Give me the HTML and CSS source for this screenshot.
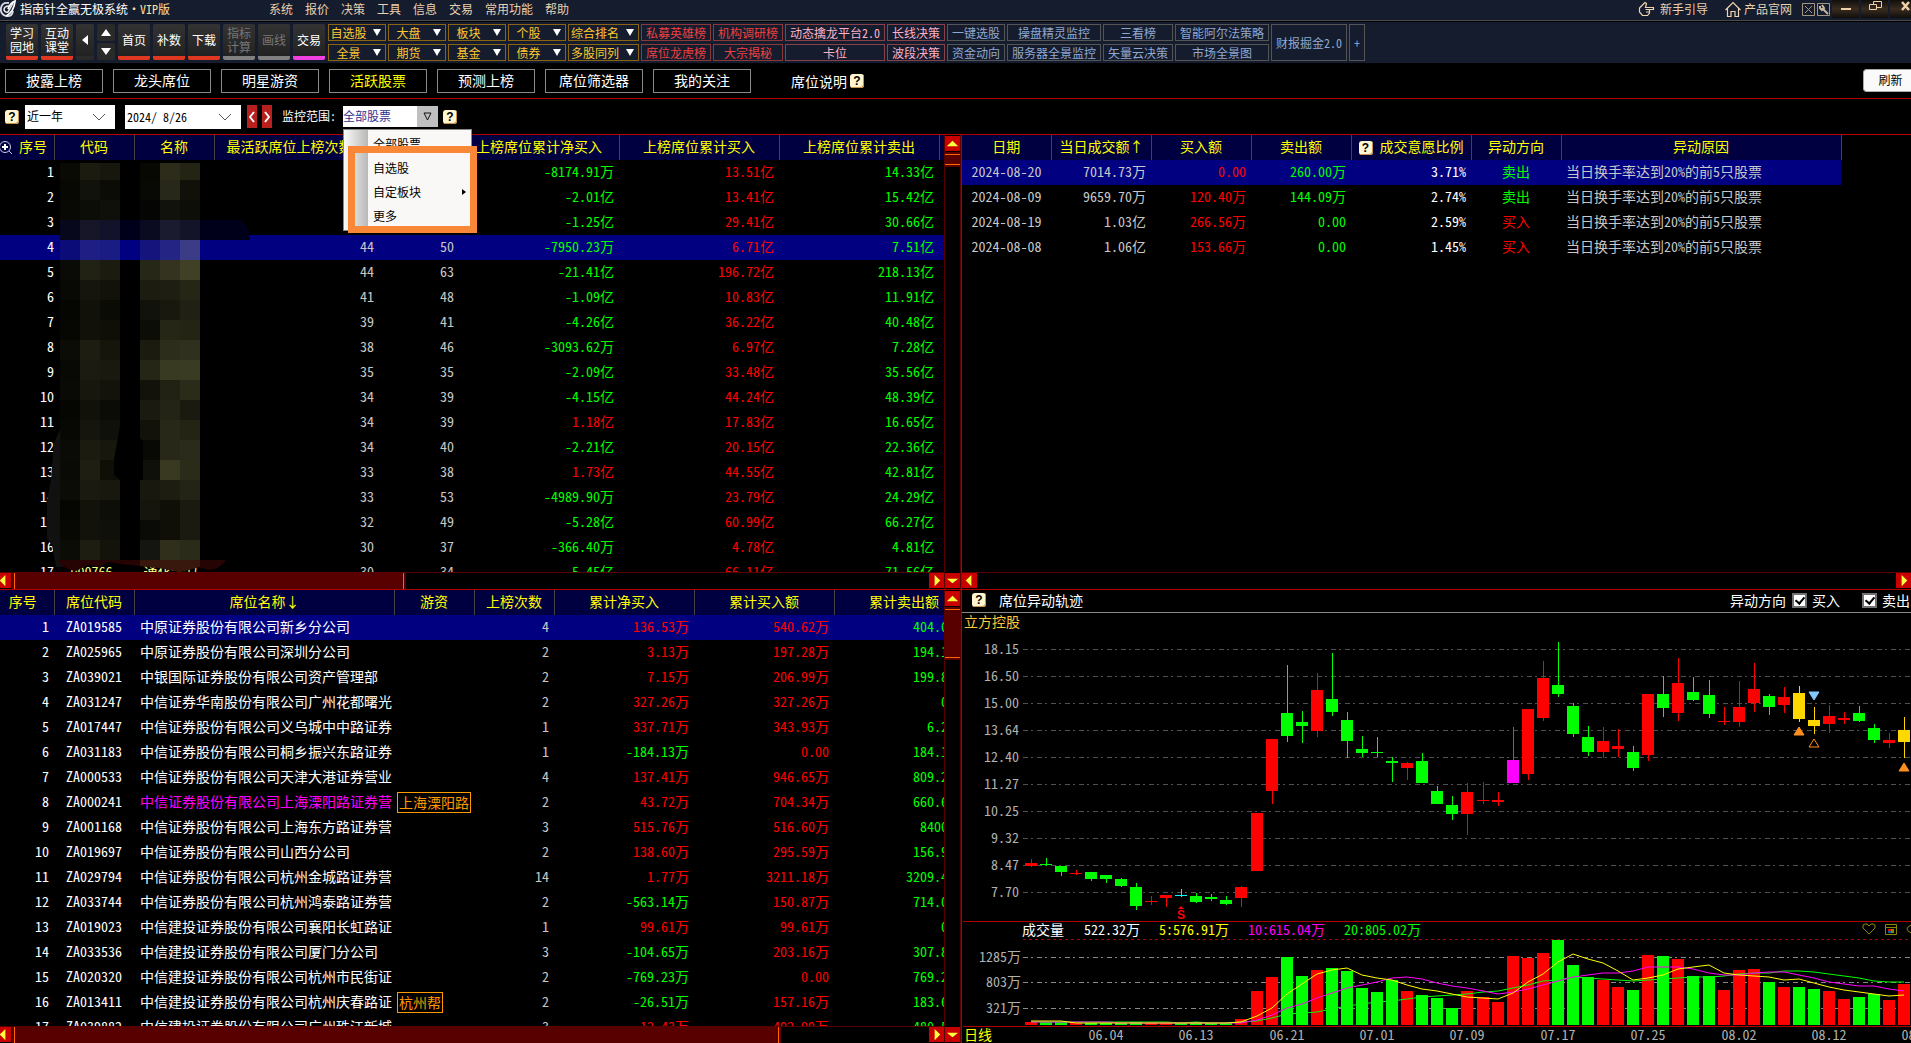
FILE: index.html
```html
<!DOCTYPE html>
<html lang="zh-CN">
<head>
<meta charset="utf-8">
<title>指南针全赢无极系统·VIP版</title>
<link rel="stylesheet" href="styles.css">
</head>
<body>
<svg class="defs" aria-hidden="true">
  <symbol id="up" viewBox="0 0 16 16"><path d="M8 5L14 11H2Z" fill="#ffff40"/></symbol>
  <symbol id="down" viewBox="0 0 16 16"><path d="M2 6H14L8 11Z" fill="#ffff40"/></symbol>
  <symbol id="left" viewBox="0 0 16 16"><path d="M10 2V14L4 8Z" fill="#ffff40"/></symbol>
  <symbol id="right" viewBox="0 0 16 16"><path d="M6 2V14L12 8Z" fill="#ffff40"/></symbol>
  <symbol id="chevron" viewBox="0 0 14 8"><path d="M1 1L7 7L13 1" fill="none" stroke="#555"/></symbol>
</svg>

<header class="titlebar">
  <svg class="logo" viewBox="0 0 16 18"><path d="M9 3Q2 2 1 8Q0 14 6 16Q12 17 13 11" fill="none" stroke="#d8d8e4" stroke-width="1.800"/><path d="M9 6Q4 6 4 10Q5 13 8 12L13 3" fill="none" stroke="#e8e8f0" stroke-width="1.600"/><path d="M6 16Q14 12 15 1Q10 3 8 9" fill="none" stroke="#fff" stroke-width="1.800"/></svg>
  <h1>指南针全赢无极系统<span>·VIP版</span></h1>
  <nav class="menu">
    <a href="#">系统</a><a href="#">报价</a><a href="#">决策</a><a href="#">工具</a><a href="#">信息</a><a href="#">交易</a><a href="#">常用功能</a><a href="#">帮助</a>
  </nav>
  <div class="links">
    <a href="#"><svg width="17" height="16" viewBox="0 0 17 16"><path d="M7 1.500L1.500 7V11L4.500 14.500H9.500L11.500 12V8.500H15.500V6.500H7.500L8.500 2.500ZM7.500 8.500H11.500M8 11H11.500" fill="none" stroke="#f0d4b0" stroke-width="1.200"/></svg>新手引导</a>
    <a href="#"><svg width="16" height="17" viewBox="0 0 16 17"><path d="M.5 9L8 1.500L15.500 9M2.500 7.500V15.500H6V10.500H10V15.500H13.500V7.500" fill="none" stroke="#f0d4b0" stroke-width="1.200"/></svg>产品官网</a>
  </div>
  <div class="tools">
    <button aria-label="关闭面板"><svg width="13" height="13" viewBox="0 0 13 13"><path d="M.5.5H12.500V12.500H.5ZM3 3L10 10M10 3L3 10" fill="none" stroke="#a59682"/></svg></button>
    <button aria-label="设置"><svg width="13" height="13" viewBox="0 0 13 13"><path d="M.5.5H12.500V12.500H.5Z" fill="none" stroke="#a59682"/><path d="M6 6L11 11" stroke="#c8b8a0" stroke-width="2"/><path d="M3 3V5L5 7L7 5L5 2" fill="none" stroke="#c8b8a0" stroke-width="2"/></svg></button>
  </div>
  <div class="window">
    <button aria-label="最小化"><svg width="12" height="14" viewBox="0 0 12 14"><path d="M1 9H11" stroke="#f0d0a8" stroke-width="2"/></svg></button>
    <button aria-label="还原"><svg width="14" height="14" viewBox="0 0 14 14"><path d="M1.500 4.500H8.500V9.500H1.500ZM5.500 4.500V1.500H13.500V7.500H8.500" fill="none" stroke="#f0d0a8"/></svg></button>
    <button aria-label="关闭"><svg width="10" height="14" viewBox="0 0 10 14"><path d="M1 2L8 10M8 2L1 10" stroke="#f0d0a8" stroke-width="2.500"/></svg></button>
  </div>
</header>

<div class="toolbar">
  <button class="tool">学习<br>园地</button>
  <button class="tool">互动<br>课堂</button>
  <button class="tool narrow" aria-label="向左"><svg width="6" height="10" viewBox="0 0 6 10"><path d="M6 0V10L0 5Z" fill="#fff"/></svg></button>
  <div class="pair">
    <button aria-label="向上"><svg width="10" height="7" viewBox="0 0 10 7"><path d="M0 7H10L5 0Z" fill="#fff"/></svg></button>
    <button aria-label="向下"><svg width="10" height="7" viewBox="0 0 10 7"><path d="M0 0H10L5 7Z" fill="#fff"/></svg></button>
  </div>
  <button class="tool">首页</button>
  <button class="tool">补数</button>
  <button class="tool">下载</button>
  <button class="tool off" disabled>指标<br>计算</button>
  <button class="tool off" disabled>画线</button>
  <button class="tool trade">交易</button>
  <div class="shortcuts">
    <button class="gold">自选股<i></i></button><button class="gold">大盘<i></i></button><button class="gold">板块<i></i></button><button class="gold">个股<i></i></button><button class="gold">综合排名<i></i></button>
    <button class="red">私募英雄榜</button><button class="red">机构调研榜</button><button class="pink">动态擒龙平台2.0</button><button class="pink">长线决策</button>
    <button>一键选股</button><button>操盘精灵监控</button><button>三看榜</button><button>智能阿尔法策略</button><button class="tall">财报掘金2.0</button><button class="tall">+</button>
    <button class="gold">全景<i></i></button><button class="gold">期货<i></i></button><button class="gold">基金<i></i></button><button class="gold">债券<i></i></button><button class="gold">多股同列<i></i></button>
    <button class="red">席位龙虎榜</button><button class="red">大宗揭秘</button><button class="pink">卡位</button><button class="pink">波段决策</button>
    <button>资金动向</button><button>服务器全景监控</button><button>矢量云决策</button><button>市场全景图</button>
  </div>
</div>

<nav class="tabs">
  <button>披露上榜</button><button>龙头席位</button><button>明星游资</button><button class="active">活跃股票</button><button>预测上榜</button><button>席位筛选器</button><button>我的关注</button>
  <span class="note">席位说明<button class="help" aria-label="说明">?</button></span>
  <button class="refresh">刷新</button>
</nav>

<div class="filters">
  <button class="help" aria-label="说明">?</button>
  <span class="field period"><select aria-label="周期"><option>近一年</option></select><svg width="14" height="8"><use href="#chevron"/></svg></span>
  <span class="field date"><input type="text" value="2024/ 8/26" aria-label="日期"><svg width="14" height="8"><use href="#chevron"/></svg></span>
  <span class="step"><button aria-label="前一日"><svg width="6" height="12" viewBox="0 0 6 12"><path d="M5 1L1 6L5 11" fill="none" stroke="#fff" stroke-width="2"/></svg></button><button aria-label="后一日"><svg width="6" height="12" viewBox="0 0 6 12"><path d="M1 1L5 6L1 11" fill="none" stroke="#fff" stroke-width="2"/></svg></button></span>
  <label for="scope">监控范围:</label>
  <span class="scope">
    <span class="field combo"><select id="scope"><option>全部股票</option></select><span class="drop"><svg width="9" height="9" viewBox="0 0 9 9"><path d="M1 1H8L4.500 8Z" fill="none" stroke="#111"/></svg></span></span>
    <span class="popup" role="menu">
      <button role="menuitem">全部股票</button><button role="menuitem">自选股</button><button role="menuitem">自定板块<svg width="4" height="6" viewBox="0 0 4 6"><path d="M0 0L4 3L0 6Z" fill="#000"/></svg></button><button role="menuitem">更多</button>
      <span class="frame"></span>
    </span>
  </span>
  <button class="help" aria-label="说明">?</button>
</div>

<main>
<section class="pane stocks">
  <div class="view">
    <table>
      <colgroup><col class="w54"><col class="w80"><col class="w80"><col class="w165"><col class="w80"><col class="w160"><col class="w160"><col class="w160"><col></colgroup>
      <thead><tr><th><svg class="lens" width="13" height="14" viewBox="0 0 13 14"><circle cx="5" cy="6" r="5.500" fill="none" stroke="#c8c8e0"/><path d="M5 3V9M2 6H8" stroke="#fff" stroke-width="2"/><path d="M9 10L12 13" stroke="#c8c8e0"/></svg>序号</th><th>代码</th><th>名称</th><th class="first">最活跃席位上榜次数</th><th></th><th>上榜席位累计净买入</th><th>上榜席位累计买入</th><th>上榜席位累计卖出</th><th></th></tr></thead>
      <tbody>
      <tr><td>1<td><td><td><td><td class="g">-8174.91万<td class="r">13.51亿<td class="g">14.33亿<td></tr>
      <tr><td>2<td><td><td><td><td class="g">-2.01亿<td class="r">13.41亿<td class="g">15.42亿<td></tr>
      <tr><td>3<td><td><td><td><td class="g">-1.25亿<td class="r">29.41亿<td class="g">30.66亿<td></tr>
      <tr class="sel"><td>4<td><td><td>44<td>50<td class="g">-7950.23万<td class="r">6.71亿<td class="g">7.51亿<td></tr>
      <tr><td>5<td><td><td>44<td>63<td class="g">-21.41亿<td class="r">196.72亿<td class="g">218.13亿<td></tr>
      <tr><td>6<td><td><td>41<td>48<td class="g">-1.09亿<td class="r">10.83亿<td class="g">11.91亿<td></tr>
      <tr><td>7<td><td><td>39<td>41<td class="g">-4.26亿<td class="r">36.22亿<td class="g">40.48亿<td></tr>
      <tr><td>8<td><td><td>38<td>46<td class="g">-3093.62万<td class="r">6.97亿<td class="g">7.28亿<td></tr>
      <tr><td>9<td><td><td>35<td>35<td class="g">-2.09亿<td class="r">33.48亿<td class="g">35.56亿<td></tr>
      <tr><td>10<td><td><td>34<td>39<td class="g">-4.15亿<td class="r">44.24亿<td class="g">48.39亿<td></tr>
      <tr><td>11<td><td><td>34<td>39<td class="r">1.18亿<td class="r">17.83亿<td class="g">16.65亿<td></tr>
      <tr><td>12<td><td><td>34<td>40<td class="g">-2.21亿<td class="r">20.15亿<td class="g">22.36亿<td></tr>
      <tr><td>13<td><td><td>33<td>38<td class="r">1.73亿<td class="r">44.55亿<td class="g">42.81亿<td></tr>
      <tr><td>14<td><td><td>33<td>53<td class="g">-4989.90万<td class="r">23.79亿<td class="g">24.29亿<td></tr>
      <tr><td>15<td><td><td>32<td>49<td class="g">-5.28亿<td class="r">60.99亿<td class="g">66.27亿<td></tr>
      <tr><td>16<td><td><td>30<td>37<td class="g">-366.40万<td class="r">4.78亿<td class="g">4.81亿<td></tr>
      <tr><td>17<td class="id">000766<td class="id">通化金马<td>30<td>34<td class="g">-5.45亿<td class="r">66.11亿<td class="g">71.56亿<td></tr>
      </tbody>
    </table>
    <svg class="mosaic" id="mosaic" width="260" height="437" aria-hidden="true"></svg>
  </div>
  <div class="vbar"><button aria-label="向上"><svg><use href="#up"/></svg></button><span class="thumb short"></span></div>
  <div class="hbar"><button class="cut" aria-label="向左"><svg><use href="#left"/></svg></button><span class="track"><span class="thumb half"></span></span><button aria-label="向右"><svg><use href="#right"/></svg></button></div>
  <div class="corner"><button aria-label="向下"><svg><use href="#down"/></svg></button></div>
</section>

<section class="pane moves">
  <div class="view">
    <table>
      <colgroup><col class="w89"><col class="w100"><col class="w100"><col class="w100"><col class="w120"><col class="w90"><col class="w280"></colgroup>
      <thead><tr><th>日期</th><th>当日成交额<span class="arrow">↑</span></th><th>买入额</th><th>卖出额</th><th><span class="help">?</span> 成交意愿比例</th><th>异动方向</th><th>异动原因</th></tr></thead>
      <tbody>
      <tr class="sel"><td>2024-08-20<td>7014.73万<td class="r">0.00<td class="g">260.00万<td class="w">3.71%<td class="g">卖出<td>当日换手率达到20%的前5只股票</tr>
      <tr><td>2024-08-09<td>9659.70万<td class="r">120.40万<td class="g">144.09万<td class="w">2.74%<td class="g">卖出<td>当日换手率达到20%的前5只股票</tr>
      <tr><td>2024-08-19<td>1.03亿<td class="r">266.56万<td class="g">0.00<td class="w">2.59%<td class="r">买入<td>当日换手率达到20%的前5只股票</tr>
      <tr><td>2024-08-08<td>1.06亿<td class="r">153.66万<td class="g">0.00<td class="w">1.45%<td class="r">买入<td>当日换手率达到20%的前5只股票</tr>
      </tbody>
    </table>
  </div>
  <div class="hbar"><button aria-label="向左"><svg><use href="#left"/></svg></button><span class="track"></span><button aria-label="向右"><svg><use href="#right"/></svg></button></div>
</section>

<section class="pane seats">
  <div class="view">
    <table>
      <colgroup><col class="w54"><col class="w80"><col class="w260"><col class="w80"><col class="w80"><col class="w140"><col class="w140"><col class="w140"></colgroup>
      <thead><tr><th>序号</th><th>席位代码</th><th>席位名称<span class="arrow">↓</span></th><th>游资</th><th>上榜次数</th><th>累计净买入</th><th>累计买入额</th><th>累计卖出额</th></tr></thead>
      <tbody>
      <tr class="sel"><td>1<td>ZA019585<td>中原证券股份有限公司新乡分公司<td><td>4<td class="r">136.53万<td class="r">540.62万<td class="g">404.09万</tr>
      <tr><td>2<td>ZA025965<td>中原证券股份有限公司深圳分公司<td><td>2<td class="r">3.13万<td class="r">197.28万<td class="g">194.15万</tr>
      <tr><td>3<td>ZA039021<td>中银国际证券股份有限公司资产管理部<td><td>2<td class="r">7.15万<td class="r">206.99万<td class="g">199.84万</tr>
      <tr><td>4<td>ZA031247<td>中信证券华南股份有限公司广州花都曙光<td><td>2<td class="r">327.26万<td class="r">327.26万<td class="g">0.00</tr>
      <tr><td>5<td>ZA017447<td>中信证券股份有限公司义乌城中中路证券<td><td>1<td class="r">337.71万<td class="r">343.93万<td class="g">6.22万</tr>
      <tr><td>6<td>ZA031183<td>中信证券股份有限公司桐乡振兴东路证券<td><td>1<td class="g">-184.13万<td class="r">0.00<td class="g">184.13万</tr>
      <tr><td>7<td>ZA000533<td>中信证券股份有限公司天津大港证券营业<td><td>4<td class="r">137.41万<td class="r">946.65万<td class="g">809.24万</tr>
      <tr class="hot"><td>8<td>ZA000241<td>中信证券股份有限公司上海溧阳路证券营<td><span class="tag">上海溧阳路</span><td>2<td class="r">43.72万<td class="r">704.34万<td class="g">660.62万</tr>
      <tr><td>9<td>ZA001168<td>中信证券股份有限公司上海东方路证券营<td><td>3<td class="r">515.76万<td class="r">516.60万<td class="g">8400.00</tr>
      <tr><td>10<td>ZA019697<td>中信证券股份有限公司山西分公司<td><td>2<td class="r">138.60万<td class="r">295.59万<td class="g">156.99万</tr>
      <tr><td>11<td>ZA029794<td>中信证券股份有限公司杭州金城路证券营<td><td>14<td class="r">1.77万<td class="r">3211.18万<td class="g">3209.41万</tr>
      <tr><td>12<td>ZA033744<td>中信证券股份有限公司杭州鸿泰路证券营<td><td>2<td class="g">-563.14万<td class="r">150.87万<td class="g">714.01万</tr>
      <tr><td>13<td>ZA019023<td>中信建投证券股份有限公司襄阳长虹路证<td><td>1<td class="r">99.61万<td class="r">99.61万<td class="g">0.00</tr>
      <tr><td>14<td>ZA033536<td>中信建投证券股份有限公司厦门分公司<td><td>3<td class="g">-104.65万<td class="r">203.16万<td class="g">307.81万</tr>
      <tr><td>15<td>ZA020320<td>中信建投证券股份有限公司杭州市民街证<td><td>2<td class="g">-769.23万<td class="r">0.00<td class="g">769.23万</tr>
      <tr><td>16<td>ZA013411<td>中信建投证券股份有限公司杭州庆春路证<td><span class="tag">杭州帮</span><td>2<td class="g">-26.51万<td class="r">157.16万<td class="g">183.67万</tr>
      <tr><td>17<td>ZA039882<td>中信建投证券股份有限公司广州珠江新城<td><td>3<td class="r">12.43万<td class="r">492.99万<td class="g">480.56万</tr>
      </tbody>
    </table>
  </div>
  <div class="vbar"><button aria-label="向上"><svg><use href="#up"/></svg></button><span class="thumb long"></span></div>
  <div class="hbar"><button class="cut" aria-label="向左"><svg><use href="#left"/></svg></button><span class="track"><span class="thumb most"></span></span><button aria-label="向右"><svg><use href="#right"/></svg></button></div>
  <div class="corner"><button aria-label="向下"><svg><use href="#down"/></svg></button></div>
</section>

<section class="pane chart">
  <header><span class="help">?</span><h2>席位异动轨迹</h2><div class="checks">异动方向<label><input type="checkbox" checked>买入</label><label><input type="checkbox" checked>卖出</label></div></header>
  <svg id="kline" width="100%" height="430" role="img" aria-label="立方控股 日线"></svg>
</section>
</main>
<script src="chart.js"></script>
</body>
</html>
```
FILE: styles.css
```css
* { box-sizing: border-box; }
body {
  margin: 0;
  height: 100vh;
  overflow: hidden;
  display: flex;
  flex-direction: column;
  background: #000;
  color: #fff;
  font: 14px/25px "Noto Sans Mono CJK SC", "Liberation Serif", "Noto Sans CJK SC", sans-serif;
  white-space: nowrap;
}
button, input, select { font: inherit; color: inherit; padding: 0; margin: 0; border: 0; background: none; border-radius: 0; }
a { color: inherit; text-decoration: none; }
h1, h2 { margin: 0; font: inherit; }
svg { display: block; flex: none; }
.defs { position: absolute; width: 0; height: 0; }
.r { color: #f00; }
.g { color: #0f0; }

/* title bar */
.titlebar { display: flex; align-items: center; height: 21px; flex: none; background: #151c2d; border-bottom: 1px solid #4a4a4a; font-size: 12px; line-height: 16px; color: #e8d0b0; padding-bottom: 2px; }
.logo { width: 16px; height: 18px; margin-right: 4px; }
.titlebar h1 { color: #fff; width: 249px; }
.titlebar h1 span { color: #ffe0a0; }
.menu { display: flex; gap: 12px; }
.links { display: flex; gap: 17px; margin-left: auto; }
.links a { display: flex; align-items: center; gap: 5px; }
.links a + a { gap: 3px; }
.tools { display: flex; gap: 2px; margin: 0 2px 0 10px; }
.window { display: flex; gap: 2px; align-self: stretch; }
.window button { width: 27px; display: flex; justify-content: center; background: linear-gradient(#100e0c, #3a2c20, #100e0c); }
.window button:last-child { width: 21px; justify-content: flex-end; }

/* toolbar */
.toolbar { display: flex; height: 42px; flex: none; background: #151c2d; border-top: 1px solid #000; padding: 2px 0 0 6px; font-size: 12px; line-height: 14px; }
.tool { width: 32px; height: 36px; margin-right: 3px; background: linear-gradient(#333, #222); border-bottom: 4px solid #e03820; border-radius: 2px; display: flex; align-items: center; justify-content: center; }
.tool.narrow { width: 18px; border-color: #2a2a2a; }
.tool.off { color: #777; border-color: #808080; }
.tool.trade { border-color: #f040e0; }
.pair { display: grid; gap: 2px; width: 18px; height: 36px; margin-right: 3px; }
.pair button { background: #2a2a2a; border-radius: 2px; display: grid; place-items: center; }
.shortcuts { display: grid; grid-template-columns: 58px 58px 58px 58px 71px 70px 70px 100px 58px 58px 94px 70px 94px 76px 16px; grid-template-rows: 17px 17px; gap: 3px 2px; }
.shortcuts button { display: flex; align-items: center; justify-content: center; border: 1px solid #555; color: #90a8d0; }
.shortcuts .tall { grid-row: span 2; }
.shortcuts .gold { display: grid; grid-template-columns: 1fr 17px; justify-items: center; border-color: #8a6410; color: #ffc830; }
.shortcuts .red { border-color: #8a3838; color: #f04040; }
.shortcuts .pink { border-color: #8a4048; color: #ffb0c8; }
.shortcuts i { border: 4px solid transparent; border-top: 7px solid #fff; border-bottom: 0; }

/* page tabs */
.tabs { display: flex; align-items: center; gap: 10px; height: 36px; flex: none; padding-left: 5px; border-bottom: 1px solid #b00000; line-height: 20px; }
.tabs > button { width: 98px; height: 24px; border: 1px solid #888; padding-bottom: 2px; }
.tabs .active { color: #ff0; }
.note { display: flex; align-items: center; gap: 3px; margin-left: 30px; }
.tabs .refresh { width: 48px; height: 23px; margin-left: auto; background: #fafafa; color: #000; border: 1px solid #aaa; border-right: 0; border-radius: 4px 0 0 4px; font-size: 12px; padding-left: 6px; }
.help { display: inline-block; width: 14px; height: 14px; font: bold 12px/14px "Liberation Sans", sans-serif; text-align: center; color: #000; background: #fff6d0; border-radius: 3px; box-shadow: inset -1px -1px #c89048; }

/* filters */
.filters { display: flex; align-items: center; height: 36px; flex: none; padding-left: 5px; border-bottom: 1px solid #b00000; font-size: 12px; line-height: 20px; }
.filters label { padding-bottom: 2px; }
.field { display: grid; align-items: center; height: 24px; background: #fff; color: #000; }
.field > * { grid-area: 1 / 1; }
.field > svg { justify-self: end; margin-right: 9px; pointer-events: none; }
.field select, .field input { width: 100%; height: 100%; padding: 0 2px 1px; appearance: none; outline: 0; }
.period { width: 90px; margin: 0 10px 0 6px; }
.date { width: 116px; margin-right: 6px; }
.step { display: flex; gap: 5px; margin-right: 10px; }
.step button { width: 10px; height: 23px; background: #b82020; display: grid; place-items: center; }
.scope { position: relative; margin: 0 5px 0 7px; }
.combo { width: 95px; height: 21px; color: #303090; }
.combo select { padding: 0 0 1px; }
.drop { justify-self: end; width: 21px; height: 21px; background: #c0c0c0; display: grid; place-items: center; pointer-events: none; }
.popup { position: absolute; z-index: 3; top: 23px; left: 0; width: 129px; height: 102px; padding: 2px 0 0 29px; border: 1px solid #888; background: linear-gradient(90deg, #fafaf8, #b8b8b8 24px, #f9f8f7 24px); }
.popup button { display: flex; align-items: center; justify-content: space-between; width: 93px; height: 24px; color: #000; }
.frame { position: absolute; top: 16px; left: 4px; width: 129px; height: 87px; border: 7px solid #f88838; }

/* panes */
main { flex: 1; min-height: 0; display: grid; grid-template: 455fr 453fr / 961fr 950fr; }
.pane { min-width: 0; min-height: 0; overflow: hidden; display: grid; grid-template: minmax(0, 1fr) 16px / minmax(0, 1fr) 17px; }
.stocks, .moves { border-bottom: 1px solid #b00000; }
.moves, .chart { border-left: 1px solid #b00000; grid-template-columns: minmax(0, 1fr); }
.view { position: relative; overflow: hidden; border-bottom: 1px solid #580000; }
table { border-collapse: collapse; table-layout: fixed; width: 100%; }
.seats table { width: 974px; }
.moves table { width: 879px; }
th, td { padding: 0; height: 25px; font-weight: normal; overflow: hidden; vertical-align: top; line-height: 23px; }
th { background: #000040; color: #ff0; border-right: 1px solid #444; text-align: center; }
td { padding-right: 5px; text-align: right; color: #c8c8c8; }
td:first-child, .w { color: #fff; }
td.r { color: #f00; }
td.g { color: #0f0; }
.sel { background: #000080; }
.arrow { font-family: "Noto Sans CJK SC", sans-serif; display: inline-block; width: 13px; overflow: hidden; vertical-align: top; }
.w54 { width: 54px; } .w80 { width: 80px; } .w89 { width: 89px; } .w90 { width: 90px; }
.w100 { width: 100px; } .w120 { width: 120px; } .w140 { width: 140px; } .w160 { width: 160px; }
.w165 { width: 165px; } .w260 { width: 260px; } .w280 { width: 280px; }
.stocks th:first-child { text-align: left; }
.stocks th:last-child { border: 0; }
.stocks td:first-child { padding: 0; }
.stocks .first { text-align: left; padding-left: 12px; }
.stocks .id { text-align: center; color: #ffff80; }
.lens { display: inline; vertical-align: middle; margin: 0 6px 0 0; }
.seats th:first-child { padding-right: 8px; }
.seats td:nth-child(2) { text-align: center; padding: 0; color: #fff; }
.seats td:nth-child(3) { text-align: left; padding: 0 0 0 6px; color: #fff; }
.seats td:nth-child(4) { text-align: left; padding: 2px 0 0 3px; }
.seats .hot td:nth-child(3) { color: #f0f; }
.tag { display: block; width: max-content; height: 21px; padding: 0 1px; border: 1px solid #f90; color: #f90; line-height: 18px; }
.moves td:first-child { color: #c8c8c8; text-align: center; padding: 0; }
.moves td:nth-child(6) { text-align: center; padding: 0; }
.moves td:last-child { text-align: left; padding-left: 5px; }
.moves .w { color: #fff; }
.mosaic { position: absolute; top: 0; left: 0; }

/* scroll bars */
.vbar, .corner { border-left: 1px solid #580000; border-right: 1px solid #580000; padding-top: 1px; }
.vbar button, .hbar button, .corner button { display: block; width: 15px; height: 15px; background: #c80000; }
.hbar button svg, .vbar button svg, .corner button svg { width: 15px; height: 15px; }
.vbar .thumb { display: block; margin-top: 1px; background: #580000; border: solid #580000; border-width: 2px 0; box-shadow: inset 0 1px #f60, inset 0 -1px #f60; }
.short { height: 15px; }
.long { height: 53px; }
.hbar { display: flex; align-items: stretch; gap: 1px; }
.hbar .cut { width: 11px; overflow: hidden; display: flex; justify-content: flex-end; }
.track { flex: 1; display: flex; }
.track .thumb { background: #580000; border: solid #580000; border-width: 0 2px; box-shadow: inset 1px 0 #f60, inset -1px 0 #f60; }
.half { width: 43%; }
.most { width: 84%; }
.corner { padding: 0; }

/* chart */
.chart { grid-template-rows: 23px 1fr; }
.chart header { display: flex; align-items: center; border-bottom: 1px solid #888; padding: 0 1px 2px 10px; line-height: 20px; }
.chart h2 { margin-left: 13px; }
.checks { display: flex; gap: 6px; margin-left: auto; }
.checks label { display: flex; align-items: center; gap: 5px; }
.checks label + label { margin-left: 16px; }
.checks input { appearance: none; width: 15px; height: 15px; border: 2px solid #707070; background: #fff; }
.checks input:checked::after { content: ""; display: block; width: 4px; height: 7px; margin: 0 auto; border: solid #000; border-width: 0 2px 2px 0; transform: rotate(40deg); }
#kline { overflow: hidden; }
#kline text { font-size: 14px; }
#kline .sell { font: bold 12px "Liberation Sans", sans-serif; }
```
FILE: chart.js
```js
const NS = 'http://www.w3.org/2000/svg';
function add(svg, name, attrs, text) {
  const el = document.createElementNS(NS, name);
  for (const k in attrs) el.setAttribute(k, attrs[k]);
  if (text) el.textContent = text;
  svg.appendChild(el);
  return el;
}

const svg = document.getElementById('kline');
const COLORS = { r: '#f00', g: '#0f0', c: '#00ffff', m: '#f0f', y: '#ffd700' };

// kind, high, body top, body bottom, low, volume top, volume colour (if it differs)
const days = [
  'r 246 250 253 254 409','g 245 251 252 253 409','g 253 253 259 263 409','r 257 260 261 262 410','g 259 259 266 268 410',
  'g 262 262 266 270 410','g 265 266 273 274 410','g 270 274 293 297 409','r 283 288 289 292 410','r 282 282 285 294 410',
  'c 276 282 283 284 410 g','g 280 283 289 290 409','g 281 284 286 288 410','g 283 287 291 292 410','r 273 274 285 294 406',
  'r 200 200 258 258 378','r 126 126 178 191 364','g 52 100 123 129 344','g 98 109 113 130 363','r 60 77 118 124 357',
  'g 40 86 99 103 355','g 99 107 128 145 358','g 123 136 140 144 375','g 124 139 140 144 379','g 144 148 150 169 367',
  'r 149 150 155 167 378','g 140 148 170 170 382','g 173 178 191 191 385','g 183 192 201 207 395','r 170 179 201 222 378',
  'r 169 187 188 191 384','r 179 187 189 193 389','m 114 147 170 170 343 r','r 96 96 161 167 345','r 48 65 105 108 340',
  'g 29 72 81 84 327','g 90 93 121 124 352','g 113 124 139 143 364','r 114 128 139 145 367','r 116 133 136 144 374',
  'g 133 139 155 158 377','r 81 81 142 148 342','g 63 81 95 104 343','r 45 70 100 108 346','g 64 79 87 88 363',
  'g 67 82 101 105 363','r 94 108 109 112 377','r 68 94 109 114 357','r 50 76 90 99 356','g 81 83 94 102 369',
  'r 74 84 92 100 374','y 73 80 106 109 374 g','y 94 107 113 121 376 g','r 92 103 111 120 378','r 99 105 107 111 386',
  'g 93 100 108 109 384','g 111 115 127 130 381','r 120 127 130 135 387','y 104 117 129 145 371 r'
].map(s => s.split(' '));

const ma5 = [408,408,408,410,410,410,410,410,410,410,410,410,410,410,409,403,395,381,371,361,357,355,362,365,367,372,376,378,381,384,385,386,380,369,361,349,341,346,350,358,367,365,362,356,354,352,360,362,363,364,367,366,370,374,377,379,381,383,382];
const ma10 = [409,409,409,409,409,409,410,410,410,410,410,410,410,410,410,407,402,395,391,385,380,375,372,369,365,364,366,370,373,375,378,381,379,376,372,368,364,362,360,360,358,354,354,354,356,360,362,362,360,359,359,362,365,369,371,373,373,376,378];
const ma20 = [409,409,409,409,409,409,409,409,409,409,410,409,410,410,409,408,405,401,400,399,396,393,391,389,388,386,384,383,382,381,379,378,375,372,368,367,364,365,366,367,368,367,366,365,364,364,363,361,360,360,358,358,359,361,363,365,368,369,369];
const left = i => 63 + 15 * i + Math.floor(i / 15);

function hline(y, stroke, dash, x1) {
  add(svg, 'line', { x1: x1 || 1, x2: '100%', y1: y + .5, y2: y + .5, stroke, 'stroke-dasharray': dash || 'none' });
}
function label(x, y, text, fill, anchor) {
  add(svg, 'text', { x, y: y + 5, fill, 'text-anchor': anchor || 'start' }, text);
}

label(2, 9, '立方控股', '#ffc840');
['18.15','16.50','15.00','13.64','12.40','11.27','10.25','9.32','8.47','7.70'].forEach((t, k) => {
  hline(36 + 27 * k, '#505050', '5 3 2 4', 61);
  label(57, 36 + 27 * k, t, '#b0b0b0', 'end');
});
[[344, '1285万'], [369, '803万'], [395, '321万']].forEach(([y, t]) => {
  hline(y, '#888', '5 3 2 4', 61);
  label(59, y, t, '#b0b0b0', 'end');
});
hline(308, '#b00000');
hline(326, '#b00000', '3 3', 61);
hline(413, '#b00000');
label(60, 317, '成交量', '#fff');
label(122, 317, '522.32万', '#fff');
label(197, 317, '5:576.91万', '#ff0');
label(286, 317, '10:615.04万', '#f0f');
label(382, 317, '20:805.02万', '#0f0');

days.forEach(([kind, high, top, bottom, low, vol, volKind], i) => {
  const x = left(i), fill = COLORS[kind];
  add(svg, 'rect', { x: x + 6, y: high, width: 1, height: low - high, fill });
  add(svg, 'rect', { x, y: top, width: 12, height: bottom - top, fill });
  add(svg, 'rect', { x, y: vol, width: 12, height: 412 - vol, fill: COLORS[volKind || kind] });
});
[[ma20, '#0f0'], [ma10, '#f0f'], [ma5, '#ff0']].forEach(([ma, stroke]) => {
  add(svg, 'polyline', { points: ma.map((y, i) => (left(i) + 6) + ',' + y).join(' '), fill: 'none', stroke });
});

// trade markers
const mark = (i, y, fill, stroke, dir) => {
  const c = left(i) + 6;
  add(svg, 'path', { d: `M${c - 5} ${y}H${c + 5}L${c} ${y + 8 * dir}Z`, fill, stroke });
};
mark(51, 122, '#ff9020', '#ff9020', -1);
mark(52, 134, 'none', '#ff9020', -1);
mark(52, 79, '#80c8ff', '#80c8ff', 1);
mark(58, 158, '#ff9020', '#ff9020', -1);
add(svg, 'text', { x: 219, y: 306, fill: '#f00', 'text-anchor': 'middle', class: 'sell' }, 'S');
add(svg, 'path', { d: 'M216 296L219 293L222 296Z', fill: '#f00' });

// indicator tools
add(svg, 'path', { d: 'M907 321L901 315V312L903 311H905L907 313L909 311H911L913 312V315Z', fill: 'none', stroke: '#888800' });
add(svg, 'path', { d: 'M923.5 311.500H934.500V321.500H923.500ZM923.500 314.500H934.500', fill: 'none', stroke: '#888800' });
add(svg, 'path', { d: 'M926 316H929V318H926Z', fill: '#f00000' });
add(svg, 'path', { d: 'M926 318H929V320H926Z', fill: '#0060a0' });
add(svg, 'path', { d: 'M929 316H932V320H929Z', fill: '#888800' });
add(svg, 'path', { d: 'M949 312Q941 316 949 320', fill: 'none', stroke: '#888800' });

label(2, 422, '日线', '#ff0');
['06.04','06.13','06.21','07.01','07.09','07.17','07.25','08.02','08.12','08.20'].forEach((t, k) => {
  label(left(5 + 6 * k) + 6, 422, t, '#b0b0b0', 'middle');
});

// blurred blocks over the code and name columns, one string per 20px band
const m = document.getElementById('mosaic');
const box = (x, y, w, h, fill) => add(m, 'rect', { x, y, width: w, height: h, fill });
add(m, 'path', { d: 'M62 290L54 308L51 345L47 366V404L52 410L56 432H70V290Z', fill: '#111' });
add(m, 'path', { d: 'M68 85H240Q248 88 250 105H70Z', fill: '#00001a' });
[
  '0a0a05 1b1b10 17170d 080803 2d2c1a 242414', '070703 12120c 0c0c06 080804 27271a 111109',
  '080804 0d0d07 10100a 050503 12120c 0e0e08', '08081c 161628 12122a 0a0a20 1b1b30 141428',
  '0c0c78 1e1e84 1b1b84 14147c 242484 3c3c86', '0a0a06 212114 1b1b10 272718 33331f 3f4026',
  '080804 15150d 12120b 1c1c10 1e1e13 262617', '050502 11110a 0b0b06 12120c 18180f 202014',
  '060603 11110a 0f0f08 0d0d08 262616 242415', '0c0c06 1d1d12 15150c 1b1b10 2d2d1b 2f301d',
  '080804 1b1b11 191910 262616 393a22 3a3b23', '090905 17170d 13130b 12120b 212114 2b2b1a',
  '050502 11110a 0c0c07 1a1a10 242416 1a1a10', '070704 15150d 10100a 12120b 282819 242415',
  '0a0a06 1b1b10 17170e 080804 282819 2b2b1b', '090905 1e1e12 0f0f08 10100a 383920 2b2b1a',
  '0c0c07 1a1a10 18180e 18180e 1d1d12 242416', '050502 12120b 0e0e08 15150d 0f0f08 1a1a10',
  '070703 12120b 10100a 0a0a06 0f0f08 1a1a10', '0c0c07 1d1d12 13130b 141410 2f2f1b 2b2b1a'
].forEach((row, r) => row.split(' ').forEach((c, k) => {
  const y = 25 + r * 20 + (r ? 0 : 3);
  box([60, 80, 100, 140, 160, 180][k], y, 20, r ? 20 : 17, '#' + c);
}));
add(m, 'path', { d: 'M120 290L114 325V340L120 345H143V306L140 303H120Z', fill: '#000' });
add(m, 'path', { d: 'M58 425H226Q220 434 210 435L198 432L180 437L160 433L140 431L120 429L110 427L100 432L88 430L76 436Q62 434 58 425Z', fill: '#260404' });
add(m, 'path', { d: 'M140 425H200V432L180 437L160 433L140 431Z', fill: '#38180c' });
```
